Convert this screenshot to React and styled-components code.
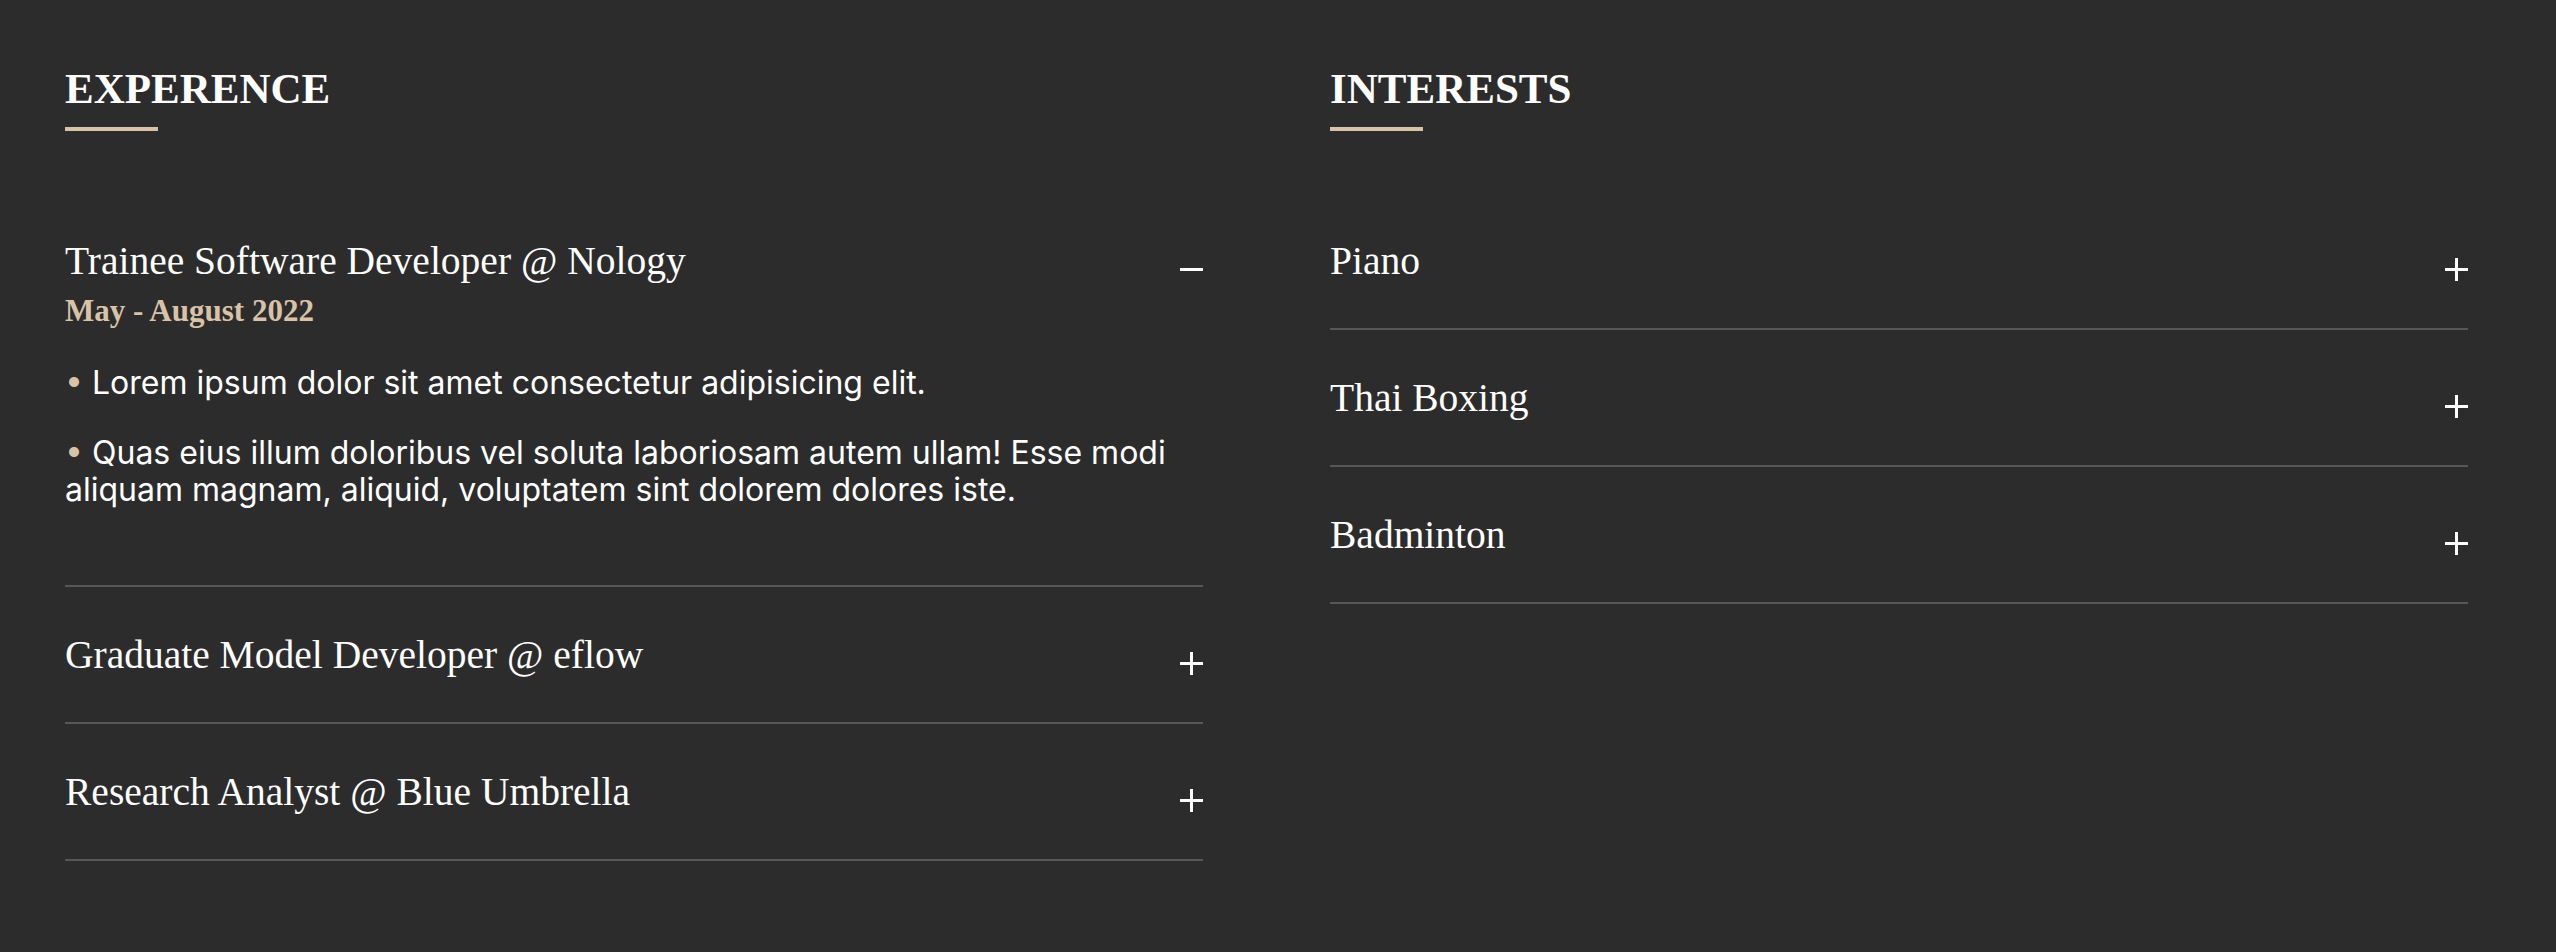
import React, { useState } from 'react';
import styled, { createGlobalStyle } from 'styled-components';

const experience = [
  {
    title: 'Trainee Software Developer @ Nology',
    date: 'May - August 2022',
    points: [
      'Lorem ipsum dolor sit amet consectetur adipisicing elit.',
      'Quas eius illum doloribus vel soluta laboriosam autem ullam! Esse modi aliquam magnam, aliquid, voluptatem sint dolorem dolores iste.',
    ],
  },
  { title: 'Graduate Model Developer @ eflow', date: '', points: [] },
  { title: 'Research Analyst @ Blue Umbrella', date: '', points: [] },
];

const interests = [
  { title: 'Piano', date: '', points: [] },
  { title: 'Thai Boxing', date: '', points: [] },
  { title: 'Badminton', date: '', points: [] },
];

const GlobalStyle = createGlobalStyle`
  html, body {
    margin: 0;
    background: #2c2c2c;
  }
`;

const Toggle = ({ open }) => (
  <ToggleIcon viewBox="0 0 23 23" aria-hidden="true">
    <line x1="0" y1="11.5" x2="23" y2="11.5" />
    {!open && <line x1="11.5" y1="0" x2="11.5" y2="23" />}
  </ToggleIcon>
);

const AccordionItem = ({ item, defaultOpen }) => {
  const [open, setOpen] = useState(defaultOpen);
  return (
    <Item>
      <ItemHeader onClick={() => setOpen(!open)}>
        <HeaderText>
          <ItemTitle>{item.title}</ItemTitle>
          {open && item.date && <ItemDate>{item.date}</ItemDate>}
        </HeaderText>
        <Toggle open={open} />
      </ItemHeader>
      {open && item.points.length > 0 && (
        <ItemBody>
          {item.points.map((p) => (
            <Point key={p}>
              <Bullet>•</Bullet> {p}
            </Point>
          ))}
        </ItemBody>
      )}
    </Item>
  );
};

const Section = ({ heading, items, openIndex }) => (
  <Column>
    <Heading>{heading}</Heading>
    <Underline />
    <List>
      {items.map((item, i) => (
        <AccordionItem key={item.title} item={item} defaultOpen={i === openIndex} />
      ))}
    </List>
  </Column>
);

const App = () => (
  <>
    <GlobalStyle />
    <Page>
      <Section heading="EXPERENCE" items={experience} openIndex={0} />
      <Section heading="INTERESTS" items={interests} openIndex={-1} />
    </Page>
  </>
);

const Page = styled.main`
  display: grid;
  grid-template-columns: 1fr 1fr;
  column-gap: 127px;
  padding: 67px 88px 0 65px;
  min-height: 952px;
  box-sizing: border-box;
  background: #2c2c2c;
  color: #fff;
`;

const Column = styled.section`
  display: flex;
  flex-direction: column;
`;

const Heading = styled.h2`
  margin: 0;
  font: 700 43px/1 'Liberation Serif', serif;
  color: #fff;
`;

const Underline = styled.span`
  display: block;
  width: 93px;
  height: 4px;
  margin-top: 17px;
  background: #d9c3a8;
`;

const List = styled.div`
  margin-top: 62px;
`;

const Item = styled.div`
  padding: 45px 0 44px;
  border-bottom: 2px solid #575757;
`;

const ItemHeader = styled.div`
  display: flex;
  justify-content: space-between;
  align-items: flex-start;
  cursor: pointer;
`;

const HeaderText = styled.div`
  display: flex;
  flex-direction: column;
  gap: 10px;
`;

const ItemTitle = styled.h3`
  margin: 0;
  font: 400 39.5px/46px 'Liberation Serif', serif;
  color: #fff;
`;

const ItemDate = styled.div`
  font: 700 31px/33px 'Liberation Serif', serif;
  color: #d9c3a8;
`;

const ToggleIcon = styled.svg`
  flex-shrink: 0;
  width: 23px;
  height: 23px;
  margin-top: 20px;
  stroke: #fff;
  stroke-width: 3;
`;

const ItemBody = styled.div`
  margin-top: 37px;
`;

const Point = styled.p`
  margin: 0 0 32px;
  font: 400 32px/37.5px Inter, sans-serif;
  color: #fff;
`;

const Bullet = styled.span`
  color: #d9c3a8;
`;

export default App;
